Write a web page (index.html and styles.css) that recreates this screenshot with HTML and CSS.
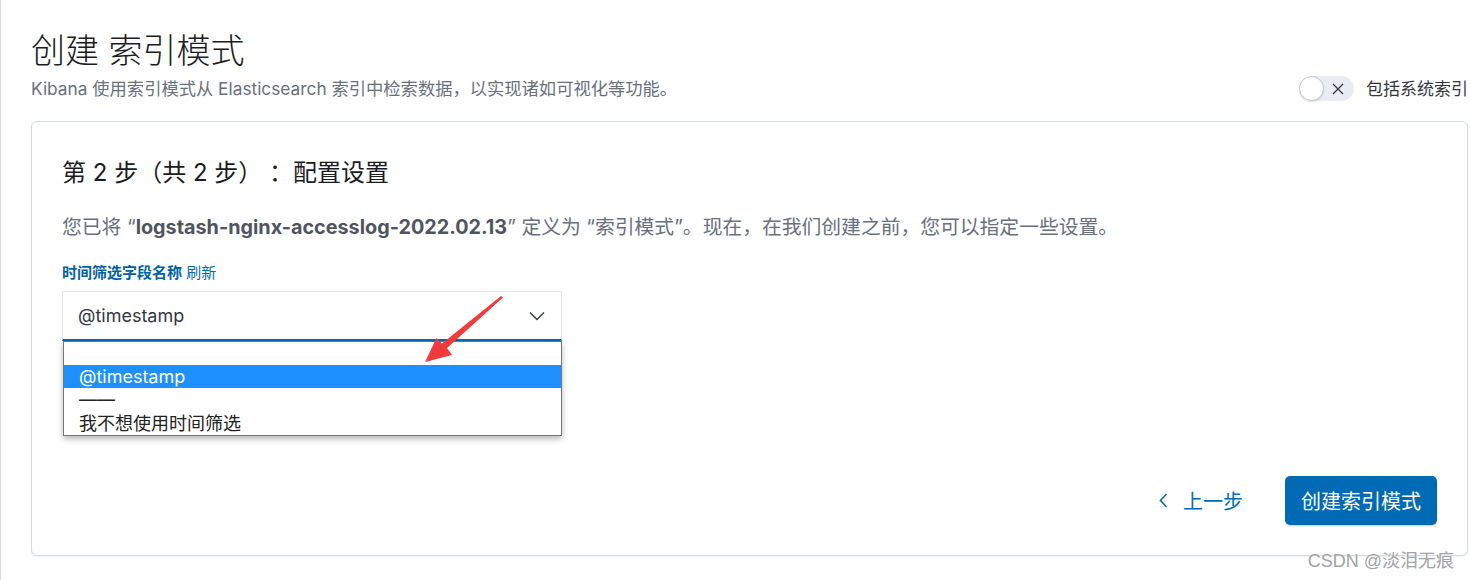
FILE: index.html
```html
<!DOCTYPE html>
<html lang="zh-CN">
<head>
<meta charset="utf-8">
<title>创建 索引模式</title>
<link rel="stylesheet" href="styles.css">
</head>
<body>
<div class="page">
  <header class="page-header">
    <div class="header-text">
      <h1 class="title">创建 索引模式</h1>
      <p class="subtitle">Kibana 使用索引模式从 Elasticsearch 索引中检索数据，以实现诸如可视化等功能。</p>
    </div>
    <div class="switch-wrap">
      <span class="switch">
        <span class="thumb"></span>
        <svg class="switch-x" width="12" height="12" viewBox="0 0 12 12"><path d="M1 1 L11 11 M11 1 L1 11" stroke="#343741" stroke-width="1.3" fill="none"/></svg>
      </span>
      <span class="switch-label">包括系统索引</span>
    </div>
  </header>

  <section class="card">
    <h2 class="step-title">第 2 步（共 2 步） ：配置设置</h2>
    <p class="desc">您已将 “<strong>logstash-nginx-accesslog-2022.02.13</strong>” 定义为 “索引模式”。现在，在我们创建之前，您可以指定一些设置。</p>
    <div class="field">
      <div class="label-row"><span class="label">时间筛选字段名称</span> <a class="link">刷新</a></div>
      <div class="select-wrap">
        <div class="select">
          <span>@timestamp</span>
          <svg class="chev" width="16" height="10" viewBox="0 0 16 10"><path d="M1 1.5 L8 8.5 L15 1.5" stroke="#343741" stroke-width="1.4" fill="none"/></svg>
        </div>
        <ul class="dropdown">
          <li class="opt"></li>
          <li class="opt active">@timestamp</li>
          <li class="opt">——</li>
          <li class="opt">我不想使用时间筛选</li>
        </ul>
      </div>
    </div>
    <div class="actions">
      <button class="btn-back">
        <svg width="9" height="15" viewBox="0 0 9 15"><path d="M7.5 1 L1.5 7.5 L7.5 14" stroke="#006bb4" stroke-width="1.6" fill="none"/></svg>
        <span>上一步</span>
      </button>
      <button class="btn-primary">创建索引模式</button>
    </div>
  </section>
</div>

<svg class="annotation" width="1470" height="580" viewBox="0 0 1470 580">
  <polygon points="501,296 503,297.5 447,348 452,355 425,362 436.5,338 442,343.5" fill="#f23a3c"/>
</svg>
<div class="watermark">CSDN @淡泪无痕</div>
</body>
</html>
```

FILE: styles.css
```css
html, body {
  margin: 0;
  padding: 0;
}

body {
  font-family: Inter, "Noto Sans CJK SC", sans-serif;
  color: #343741;
  background: #ffffff;
  position: relative;
  width: 1470px;
  height: 580px;
  overflow: hidden;
}

.page {
  border-left: 1px solid #d3dae6;
  padding: 31px 2px 0 30px;
  height: 580px;
  box-sizing: border-box;
}

.page-header {
  display: flex;
  justify-content: space-between;
  align-items: flex-end;
}

.title {
  margin: 0;
  font-size: 34px;
  line-height: 40px;
  font-weight: 300;
  color: #1a1c21;
}

.subtitle {
  margin: 7px 0 0;
  font-size: 17.3px;
  line-height: 22px;
  color: #69707d;
}

.switch-wrap {
  display: flex;
  align-items: center;
  gap: 12px;
  margin-bottom: -1px;
}

.switch {
  position: relative;
  display: flex;
  align-items: center;
  justify-content: flex-end;
  width: 55px;
  height: 25px;
  border-radius: 13px;
  background: #e9edf3;
  box-sizing: border-box;
  padding-right: 10px;
}

.thumb {
  position: absolute;
  left: 0;
  top: 0;
  width: 25px;
  height: 25px;
  border-radius: 50%;
  background: #ffffff;
  border: 1px solid #c4c8cf;
  box-sizing: border-box;
  box-shadow: 0 1px 2px rgba(0, 0, 0, 0.12);
}

.switch-x {
  display: block;
}

.switch-label {
  font-size: 17px;
  line-height: 22px;
  color: #343741;
  white-space: nowrap;
}

.card {
  margin-top: 21px;
  border: 1px solid #d3dae6;
  border-radius: 6px;
  padding: 36px 30px 30px;
  box-shadow: 0 1px 2px rgba(152, 162, 179, 0.15);
  background: #ffffff;
}

.step-title {
  margin: 0;
  font-size: 24px;
  line-height: 30px;
  font-weight: 400;
  color: #1a1c21;
}

.desc {
  margin: 25px 0 0;
  font-size: 19.8px;
  line-height: 28px;
  color: #69707d;
}

.desc strong {
  color: #4f545e;
  font-weight: 700;
}

.label-row {
  margin-top: 23px;
  font-size: 15px;
  line-height: 18px;
}

.label {
  font-weight: 700;
  color: #0061a6;
}

.link {
  color: #006bb4;
}

.select-wrap {
  position: relative;
  margin-top: 9px;
  width: 500px;
}

.select {
  height: 50px;
  box-sizing: border-box;
  border: 1px solid #e3e7ef;
  border-bottom: 2px solid #006bb4;
  background: #ffffff;
  display: flex;
  align-items: center;
  justify-content: space-between;
  padding: 0 16px 0 15px;
  font-size: 18px;
  color: #343741;
  box-shadow: 0 3px 2px -2px rgba(152, 162, 179, 0.2);
}

.chev {
  display: block;
}

.dropdown {
  position: absolute;
  top: 100%;
  left: 1px;
  right: 0;
  margin: 0;
  padding: 0;
  list-style: none;
  background: #ffffff;
  border: 1px solid #767676;
  box-shadow: 0 3px 6px rgba(0, 0, 0, 0.28);
}

.opt {
  height: 23.2px;
  line-height: 23.2px;
  padding-left: 15px;
  font-size: 18px;
  color: #222222;
}

.opt.active {
  background: #1e90ff;
  color: #ffffff;
}

.actions {
  margin-top: 135px;
  display: flex;
  justify-content: flex-end;
  align-items: center;
  gap: 26px;
}

.btn-back {
  display: flex;
  align-items: center;
  gap: 15px;
  border: 0;
  background: none;
  padding: 0 16px;
  height: 49px;
  font-family: inherit;
  font-size: 20px;
  color: #006bb4;
}

.btn-back svg {
  display: block;
}

.btn-primary {
  height: 49px;
  padding: 0 16px;
  border: 0;
  border-radius: 5px;
  background: #006bb4;
  color: #ffffff;
  font-family: inherit;
  font-size: 20px;
  box-shadow: 0 2px 2px -1px rgba(54, 97, 126, 0.3);
}

.annotation {
  position: absolute;
  left: 0;
  top: 0;
  pointer-events: none;
}

.watermark {
  position: absolute;
  right: 16px;
  bottom: 8px;
  font-family: "Liberation Sans", "Noto Sans CJK SC", sans-serif;
  font-size: 18px;
  line-height: 22px;
  color: #a3a3a3;
  text-shadow: 0 0 2px #ffffff;
}
```
